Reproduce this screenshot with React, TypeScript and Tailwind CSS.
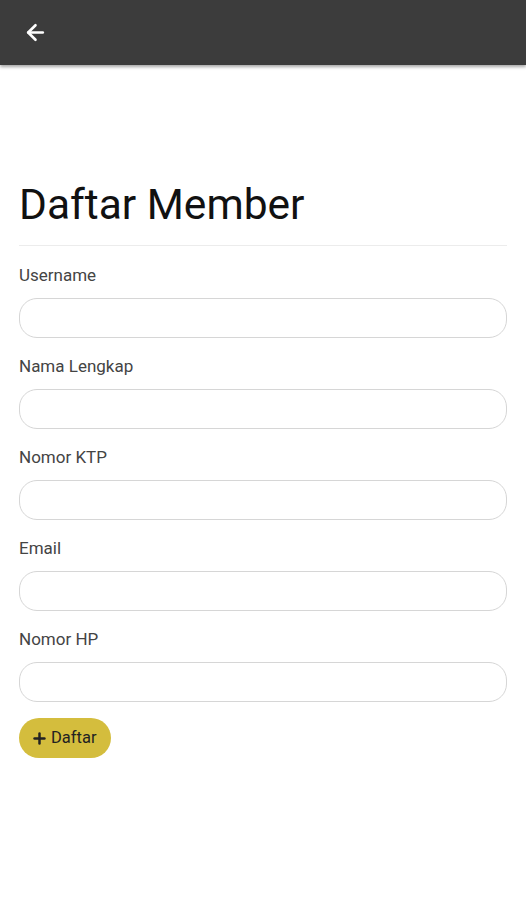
import { ArrowLeft, Plus } from "lucide-react";

const fields = ["Username", "Nama Lengkap", "Nomor KTP", "Email", "Nomor HP"];

export default function App() {
    return (
        <div className="min-h-screen bg-white" style={{ fontFamily: "Roboto, 'Liberation Sans', sans-serif" }}>
            <header className="h-[65px] bg-[#3c3c3c] flex items-center px-[23px] shadow-[0_2px_3px_rgba(0,0,0,0.35)]">
                <ArrowLeft className="text-white w-[25px] h-[25px]" strokeWidth={2.5} />
            </header>
            <main className="px-[19px] pt-[118px]">
                <h1 className="text-[42.5px] leading-[44px] text-[#111]">Daftar Member</h1>
                <hr className="mt-[18px] border-t border-[#ececec]" />
                <form className="mt-[19px] flex flex-col gap-[18px]">
                    {fields.map((f) => (
                        <div key={f} className="flex flex-col">
                            <label className="text-[17px] leading-[20px] text-[#444]">{f}</label>
                            <input className="mt-[13px] h-[40px] w-full rounded-[18px] border border-[#d6d6d6] px-4 outline-none" />
                        </div>
                    ))}
                    <div className="-mt-[2px]">
                        <button type="button" className="h-[40px] pl-[12px] pr-[14px] rounded-full bg-[#d4bd3d] flex items-center gap-[3px] text-[16.5px] text-[#222]">
                            <Plus className="w-[17px] h-[17px]" strokeWidth={3.5} />
                            Daftar
                        </button>
                    </div>
                </form>
            </main>
        </div>
    );
}
